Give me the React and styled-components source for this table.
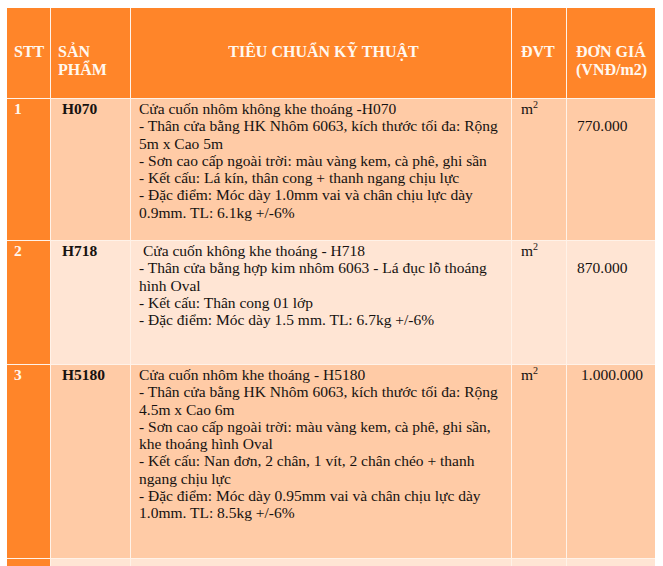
import React from 'react';
import styled, { createGlobalStyle } from 'styled-components';

const colors = {
  orange: '#ff8529',
  peach: '#ffcba6',
  light: '#ffe5d4',
  line: '#fff2e8',
  head: '#fff8f0',
  text: '#161210',
};

const GlobalStyle = createGlobalStyle`
  html, body {
    margin: 0;
    padding: 0;
    background: #ffffff;
  }
  body {
    font-family: "Liberation Serif", "Times New Roman", serif;
  }
`;

const Page = styled.div`
  padding: 8px 0 0 7px;
  height: 566px;
  box-sizing: border-box;
  overflow: hidden;
`;

const Grid = styled.div`
  display: grid;
  grid-template-columns: 43px 79px 380px 54px 88px;
  grid-template-rows: 90px 141px 123px 193px 80px;
  gap: 1px;
  width: 648px;
  background: ${colors.line};
  font-size: 15.5px;
  line-height: 17.3px;
`;

const HeadCell = styled.div`
  background: ${colors.orange};
  color: ${colors.head};
  font-weight: bold;
  font-size: 16px;
  line-height: 18px;
  padding: 35px 2px 0 ${(p) => p.$left || 7}px;
  text-align: ${(p) => (p.$center ? 'center' : 'left')};
  white-space: nowrap;
`;

const NumCell = styled.div`
  background: ${colors.orange};
  color: ${colors.head};
  font-weight: bold;
  padding: 1px 0 0 7px;
`;

const Cell = styled.div`
  background: ${(p) => (p.$light ? colors.light : colors.peach)};
  color: ${colors.text};
  padding: ${(p) => (p.$top || 0) + 1}px 2px 0 ${(p) => p.$left || 8}px;
`;

const Product = styled(Cell)`
  font-weight: bold;
`;

const Line = styled.div`
  white-space: nowrap;
`;

const Sup = styled.sup`
  font-size: 10px;
  line-height: 0;
  vertical-align: 6px;
`;

const rows = [
  {
    stt: '1',
    code: 'H070',
    price: '770.000',
    priceTop: 17,
    priceLeft: 10,
    lines: [
      'Cửa cuốn nhôm không khe thoáng -H070',
      '- Thân cửa bằng HK Nhôm 6063, kích thước tối đa: Rộng',
      '5m x Cao 5m',
      '- Sơn cao cấp ngoài trời: màu vàng kem, cà phê, ghi sần',
      '- Kết cấu: Lá kín, thân cong + thanh ngang chịu lực',
      '- Đặc điểm: Móc dày 1.0mm vai và chân chịu lực dày',
      '0.9mm. TL: 6.1kg +/-6%',
    ],
  },
  {
    stt: '2',
    code: 'H718',
    light: true,
    price: '870.000',
    priceTop: 17,
    priceLeft: 10,
    firstIndent: 4,
    lines: [
      'Cửa cuốn không khe thoáng - H718',
      '- Thân cửa bằng hợp kim nhôm 6063 - Lá đục lỗ thoáng',
      'hình Oval',
      '- Kết cấu: Thân cong 01 lớp',
      '- Đặc điểm: Móc dày 1.5 mm. TL: 6.7kg +/-6%',
    ],
  },
  {
    stt: '3',
    code: 'H5180',
    price: '1.000.000',
    priceTop: 0,
    priceLeft: 14,
    lines: [
      'Cửa cuốn nhôm khe thoáng - H5180',
      '- Thân cửa bằng HK Nhôm 6063, kích thước tối đa: Rộng',
      '4.5m x Cao 6m',
      '- Sơn cao cấp ngoài trời: màu vàng kem, cà phê, ghi sần,',
      'khe thoáng hình Oval',
      '- Kết cấu: Nan đơn, 2 chân, 1 vít, 2 chân chéo + thanh',
      'ngang chịu lực',
      '- Đặc điểm: Móc dày 0.95mm vai và chân chịu lực dày',
      '1.0mm. TL: 8.5kg +/-6%',
    ],
  },
];

export default function App() {
  return (
    <Page>
      <GlobalStyle />
      <Grid>
        <HeadCell>STT</HeadCell>
        <HeadCell>
          SẢN
          <br />
          PHẨM
        </HeadCell>
        <HeadCell $center>TIÊU CHUẨN KỸ THUẬT</HeadCell>
        <HeadCell $left={9}>ĐVT</HeadCell>
        <HeadCell $left={9}>
          ĐƠN GIÁ
          <br />
          (VNĐ/m2)
        </HeadCell>

        {rows.map((row) => (
          <React.Fragment key={row.stt}>
            <NumCell>{row.stt}</NumCell>
            <Product $light={row.light} $left={11}>
              {row.code}
            </Product>
            <Cell $light={row.light}>
              {row.lines.map((text, i) => (
                <Line
                  key={i}
                  style={i === 0 && row.firstIndent ? { paddingLeft: row.firstIndent } : undefined}
                >
                  {text}
                </Line>
              ))}
            </Cell>
            <Cell $light={row.light} $left={9}>
              m<Sup>2</Sup>
            </Cell>
            <Cell $light={row.light} $top={row.priceTop} $left={row.priceLeft}>
              {row.price}
            </Cell>
          </React.Fragment>
        ))}

        <NumCell />
        <Cell $light />
        <Cell $light />
        <Cell $light />
        <Cell $light />
      </Grid>
    </Page>
  );
}
